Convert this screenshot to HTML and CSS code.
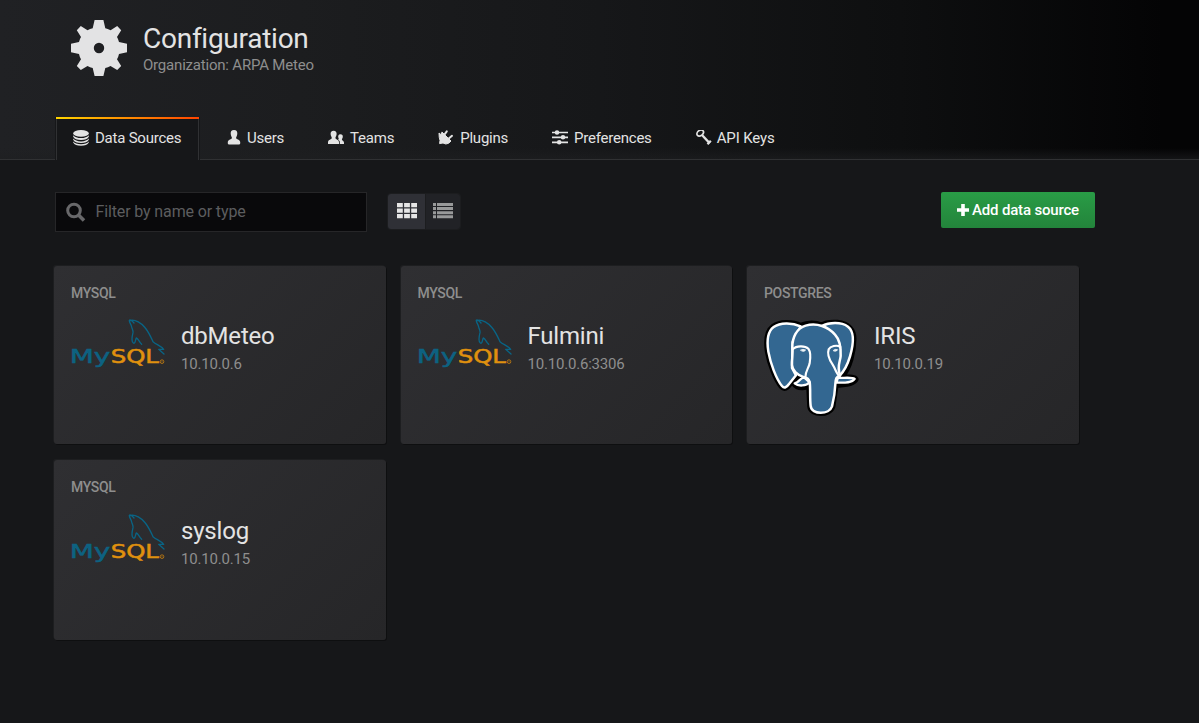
FILE: index.html
```html
<!DOCTYPE html>
<html lang="en">
<head>
<meta charset="utf-8">
<title>Configuration</title>
<link rel="stylesheet" href="styles.css">
</head>
<body>
<svg class="defs" aria-hidden="true">
  <symbol id="mysql" viewBox="18 27 285 147" overflow="visible">
    <text class="logo-my" x="14" y="160" textLength="122" lengthAdjust="spacingAndGlyphs">My</text>
    <text class="logo-sql" x="137" y="160" textLength="145" lengthAdjust="spacingAndGlyphs">SQL</text>
    <g fill="none" stroke="#096485" stroke-width="4" stroke-linecap="round" stroke-linejoin="round">
      <path d="M207 39C200 30 192 28 193 32C193 38 199 43 200 51C201 57 205 61 204 68C201 80 199 95 205 99C211 103 211 88 214 84C220 86 222 95 230 103M193 32C210 26 231 40 241 54C252 68 258 82 264 95C274 104 289 108 296 118L281 118L297 132"/>
    </g>
    <circle cx="291" cy="155" r="5.5" fill="none" stroke="#c47d10" stroke-width="2.5"/>
    <circle cx="291" cy="155" r="1.5" fill="#c47d10"/>
  </symbol>
</svg>

<header class="page-header">
  <div class="heading">
    <svg class="gear" viewBox="0 0 56 56"><path fill="#e3e3e4" fill-rule="evenodd" d="M23.6 0H32.4L34.3 8.2Q36.5 8.6 39.6 10.3L46.2 6L50.2 10.2L46 17Q47.4 19.3 48 22L56 23.8V32.2L48 34Q47.4 37 46 39.2L50.2 46L46.2 50L39.5 46Q37 47.5 34.3 48L32.4 56H23.6L21.7 48Q19 47.5 16.5 46L9.8 50L5.8 46L10 39.2Q8.6 37 8 34L0 32.2V23.8L8 22Q8.6 19.3 10 17L5.8 10.2L9.8 6L16.5 10.3Q19 8.7 21.7 8.2ZM28 22.8A5.2 5.2 0 1 0 28 33.2A5.2 5.2 0 1 0 28 22.8Z"/></svg>
    <div>
      <h1>Configuration</h1>
      <p class="org">Organization: ARPA Meteo</p>
    </div>
  </div>
  <nav class="tabs">
    <a class="tab active"><svg class="ico" viewBox="0 0 16 16"><g fill="#e3e3e3"><ellipse cx="8" cy="3.4" rx="7.8" ry="3.3"/><path d="M.2 5.2Q2.5 8 8 8T15.8 5.2V6.8Q14 10 8 10T.2 6.8ZM.2 8.6Q2.5 11.4 8 11.4T15.8 8.6V9.8Q14 13 8 13T.2 9.8ZM.2 11.6Q2.5 14.2 8 14.2T15.8 11.6V12.5Q14 15.7 8 15.7T.2 12.5Z"/></g></svg>Data Sources</a>
    <a class="tab users"><svg class="ico narrow" viewBox="0 0 14 16"><path fill="#e3e3e3" d="M7 0C9.6 0 10.4 1.7 10.3 3.8C10.2 5.8 9.2 7 9 8C9.2 9.4 13 9.4 13.2 12V13.6Q13 14.6 12 14.6H2Q1 14.6 .8 13.6V12C1 9.4 4.8 9.4 5 8C4.8 7 3.8 5.8 3.7 3.8C3.6 1.7 4.4 0 7 0Z"/></svg>Users</a>
    <a class="tab"><svg class="ico" viewBox="0 0 16 16"><g fill="#e3e3e3"><path d="M5.6 .8C7.8 .8 8.7 2.2 8.6 4.1C8.5 6 7.6 7 7.4 7.9C7.6 9.4 10.8 9.4 11 12V14H0V12C.2 9.4 3.6 9.4 3.8 7.9C3.6 7 2.7 6 2.6 4.1C2.5 2.2 3.4 .8 5.6 .8Z"/><path d="M12.4 4.2C14.3 4.2 14.9 5.4 14.8 6.8C14.7 8.2 14 8.8 13.9 9.5C14 10.8 15.9 10.7 16 12.6V14H11.8V11.6C11.5 10.4 10.7 10 10 9.4C10.9 9.2 11 9 10.5 8.3C9.7 6.3 10.3 4.2 12.4 4.2Z"/></g></svg>Teams</a>
    <a class="tab"><svg class="ico" viewBox="0 0 16 16"><g stroke="#e3e3e3" stroke-linecap="round" fill="#e3e3e3"><path stroke-width="1" stroke-linejoin="round" d="M4.2 2.2L13 11Q11 14 7.8 14L5 13L1.6 13.6L2 10.4Q1 8 1 3L3 4.6Z"/><path fill="none" stroke-width="2" d="M6.6 4.4L8.8 1.4M10.8 8.6L14 5.8"/></g></svg>Plugins</a>
    <a class="tab"><svg class="ico" viewBox="0 0 16 16"><g stroke="#e3e3e3" stroke-width="1.7" fill="#e3e3e3"><path d="M0 2.5H16M0 7.3H16M0 12.3H16"/><circle cx="5" cy="2.5" r="1.4"/><circle cx="11" cy="7.3" r="1.4"/><circle cx="7.2" cy="12.3" r="1.4"/></g></svg>Preferences</a>
    <a class="tab keys"><svg class="ico key" viewBox="0 0 16 16"><g fill="none" stroke="#e3e3e3"><ellipse cx="4.2" cy="3" rx="3.6" ry="2.6" transform="rotate(-38 4.2 3)" stroke-width="1.7"/><path d="M6 5L13.7 13.3" stroke-width="2.4"/><path d="M14.8 10.7L11.5 14.3" stroke-width="2.2"/></g></svg>API Keys</a>
  </nav>
</header>

<main>
  <div class="toolbar">
    <div class="filter"><svg class="search" viewBox="0 0 20 20"><g fill="none" stroke="#68686a"><circle cx="8" cy="8.5" r="6.3" stroke-width="3"/><path d="M12.5 13L18 18.5" stroke-width="3.6"/></g></svg><span>Filter by name or type</span></div>
    <div class="layout-modes">
      <span class="mode on"><svg viewBox="0 0 20 16"><path fill="#e6e6e6" d="M0 0H5.8V4.3H0ZM7.1 0H12.9V4.3H7.1ZM14.2 0H20V4.3H14.2ZM0 5.5H5.8V9.8H0ZM7.1 5.5H12.9V9.8H7.1ZM14.2 5.5H20V9.8H14.2ZM0 11H5.8V15.3H0ZM7.1 11H12.9V15.3H7.1ZM14.2 11H20V15.3H14.2Z"/></svg></span>
      <span class="mode"><svg viewBox="0 0 20 16"><path fill="#98999a" d="M0 0H3V3H0ZM4 0H20V3H4ZM0 4.1H3V7.1H0ZM4 4.1H20V7.1H4ZM0 8.2H3V11.2H0ZM4 8.2H20V11.2H4ZM0 12.3H3V15.3H0ZM4 12.3H20V15.3H4Z"/></svg></span>
    </div>
    <a class="add"><svg viewBox="0 0 12 12"><path fill="#fff" d="M4.2 0H7.8V4.2H12V7.8H7.8V12H4.2V7.8H0V4.2H4.2Z"/></svg>Add data source</a>
  </div>

  <section class="cards">
    <article class="card"><div class="type">MYSQL</div><div class="body"><svg class="logo-mysql"><use href="#mysql"/></svg><div><h2>dbMeteo</h2><p>10.10.0.6</p></div></div></article>
    <article class="card"><div class="type">MYSQL</div><div class="body"><svg class="logo-mysql"><use href="#mysql"/></svg><div><h2>Fulmini</h2><p>10.10.0.6:3306</p></div></div></article>
    <article class="card"><div class="type">POSTGRES</div><div class="body">
      <svg class="logo-pg" viewBox="12 24 285 285">
        <g stroke-linejoin="round" stroke-linecap="round">
          <g fill="#000" stroke="#000" stroke-width="21">
            <path d="M122 43C96 31 60 31 41 45C21 60 20 87 25 119C31 153 49 202 66 222C73 230 80 226 87 216L105 196L119 198C112 208 104 208 104 214C113 228 139 226 149 219L152 283C154 307 208 309 216 283L226 216C248 218 276 214 285 202C278 196 262 201 244 193C267 166 279 119 279 80C279 56 264 37 232 34C210 32 194 36 185 42C163 33 141 35 122 43Z"/>
          </g>
          <g stroke="#fff" stroke-width="7.5" fill="#336791">
            <path d="M122 43C96 31 60 31 41 45C21 60 20 87 25 119C31 153 49 202 66 222C73 230 80 226 87 216L108 190L96 168L98 90Z"/>
            <path d="M185 42C207 31 244 29 264 44C288 62 278 105 270 133C263 157 250 180 238 192L215 110Z"/>
            <path d="M97 105C97 78 109 49 137 41C171 31 205 45 225 68C241 85 243 108 242 132C241 148 230 162 240 190C229 194 227 200 226 216C225 244 221 263 216 283C208 309 155 309 152 282C149 257 152 231 149 210C146 200 139 197 133 196C111 190 97 175 96 159C95 139 100 124 97 105Z"/>
            <path fill="none" stroke-width="6.5" d="M98 112C109 100 136 101 145 110C153 121 151 142 149 154C146 169 136 177 136 196M241 105C230 97 211 103 206 112C201 126 210 146 218 158C228 174 231 190 239 192"/>
          </g>
          <path fill="#e8eef2" stroke="#fff" stroke-width="2" d="M122 114Q129 110 137 114Q134 119 128 118ZM220 115Q226 110 233 113Q231 118 225 118Z"/>
          <path fill="#336791" stroke="#fff" stroke-width="7" d="M133 197C120 196 119 211 104 214C115 224 139 222 149 211ZM234 197C243 200 274 193 284 201C276 214 249 212 229 212Z"/>
        </g>
      </svg><div><h2>IRIS</h2><p>10.10.0.19</p></div></div></article>
    <article class="card lower"><div class="type">MYSQL</div><div class="body"><svg class="logo-mysql"><use href="#mysql"/></svg><div><h2>syslog</h2><p>10.10.0.15</p></div></div></article>
  </section>
</main>
</body>
</html>
```
FILE: styles.css
```css
* { box-sizing: border-box; }
body {
  margin: 0;
  height: 723px;
  overflow: hidden;
  background: #161719;
  color: #e3e3e3;
  font-family: Roboto, sans-serif;
  font-size: 15px;
}
h1, h2, p { margin: 0; font-weight: 400; }
.defs { display: none; }

.page-header {
  height: 160px;
  padding: 20px 0 0 55px;
  display: flex;
  flex-direction: column;
  justify-content: space-between;
  border-bottom: 1px solid #303133;
  background: linear-gradient(180deg, transparent 148px, rgba(30, 31, 33, .6) 159px), linear-gradient(90deg, #202124 0, #1c1d1f 25%, #161719 50%, #0e0f10 75%, #040405 97%);
}
.heading { display: flex; gap: 16px; padding-left: 16px; }
.gear { width: 56px; height: 56px; }
h1 { font-size: 28px; line-height: 34px; margin-top: 2px; letter-spacing: -.26px; }
.org { font-size: 15px; line-height: 20px; margin-top: -1px; color: #8e8e8e; letter-spacing: -.2px; }

.tabs { display: flex; height: 43px; margin-bottom: -1px; }
.tab {
  display: flex;
  align-items: center;
  gap: 6px;
  height: 43px;
  padding: 0 22px 2px;
  white-space: nowrap;
  letter-spacing: -.23px;
}
.tab.active {
  width: 145px;
  padding: 0 17px 3px;
  margin-right: 5px;
  border: 1px solid #303133;
  border-top: 2px solid;
  border-bottom: 0;
  border-image: linear-gradient(90deg, #ffd500, #ff4400) 2 0 0;
  background: linear-gradient(#303133, #303133) 0 0 / 1px 100% no-repeat, linear-gradient(#303133, #303133) 100% 0 / 1px 100% no-repeat, #161719;
}
.tab.keys { letter-spacing: -.12px; }
.ico { width: 16px; height: 16px; flex: none; }
.tab.active .ico { margin-top: -1px; }
.ico.narrow { width: 14px; }
.ico.key { margin-right: -1px; }

main { padding: 32px 0 0 54px; }
.toolbar { display: flex; width: 1041px; height: 40px; padding-left: 1px; }
.filter {
  width: 312px;
  height: 40px;
  display: flex;
  align-items: center;
  gap: 9.5px;
  padding: 0 0 2px 10px;
  border: 1px solid #262628;
  background: #09090b;
  color: #5c5d5f;
  font-size: 16px;
  letter-spacing: -.13px;
}
.search { width: 20px; height: 20px; margin-top: 2px; }
.layout-modes { display: flex; width: 72px; height: 35px; margin: 2px 0 0 21px; border-radius: 3px; overflow: hidden; box-shadow: 0 0 0 1px #1c1d1f; }
.mode { flex: 1; display: flex; align-items: center; justify-content: center; padding: 0 0 1px; background: #212226; }
.mode.on { padding-left: 2px; background: #2f3036; border-right: 1px solid #1c1d1f; }
.mode svg { width: 20px; height: 16px; }
.add {
  width: 154px;
  height: 36px;
  margin-left: auto;
  display: flex;
  align-items: center;
  justify-content: center;
  gap: 3px;
  border-radius: 2px;
  background: linear-gradient(#299c46, #23843b);
  color: #fff;
  font-weight: 500;
  letter-spacing: -.17px;
}
.add svg { width: 12px; height: 12px; }

.cards {
  display: grid;
  grid-template-columns: repeat(3, 331.5px);
  grid-template-rows: 178px 180px;
  gap: 16px 15px;
  margin-top: 34px;
}
.card {
  padding: 18px 17px;
  border-radius: 3px;
  background: linear-gradient(135deg, #2f2f32, #262628);
  box-shadow: -1px -1px 0 rgba(255, 255, 255, .03), 1px 1px 0 rgba(0, 0, 0, .35);
}
.type { font-size: 14px; font-weight: 500; line-height: 18px; color: #8e8e8e; letter-spacing: -.35px; }
.body { display: flex; gap: 15px; margin-top: 17px; }
.lower .body { margin-top: 18px; }
.logo-mysql { width: 95px; height: 49px; overflow: visible; }
.logo-pg { width: 95px; height: 95px; margin-top: 1px; overflow: visible; }
h2 { font-size: 24px; line-height: 30px; margin-top: 2px; letter-spacing: -.2px; }
.body p { font-size: 15px; line-height: 20px; margin-top: 3px; color: #8e8e8e; letter-spacing: -.2px; }
.logo-my, .logo-sql { font-family: "DejaVu Sans", sans-serif; font-size: 59px; font-weight: 400; letter-spacing: 0; stroke-width: 1.5; }
.logo-my { fill: #0d6282; stroke: #0d6282; }
.logo-sql { fill: #e0910e; stroke: #e0910e; }
```
